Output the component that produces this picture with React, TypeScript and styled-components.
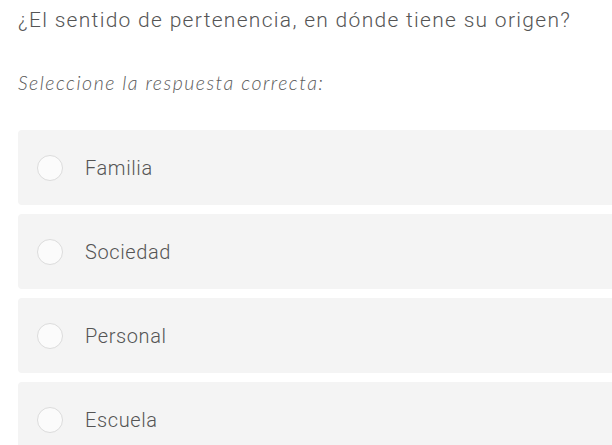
import React from 'react';
import styled, { createGlobalStyle } from 'styled-components';

const GlobalStyle = createGlobalStyle`
  html, body {
    margin: 0;
    padding: 0;
    background: #ffffff;
    overflow: hidden;
  }
`;

const options = ['Familia', 'Sociedad', 'Personal', 'Escuela'];

const App: React.FC = () => {
  return (
    <>
      <GlobalStyle />
      <Page>
        <Question>¿El sentido de pertenencia, en dónde tiene su origen?</Question>
        <Hint>Seleccione la respuesta correcta:</Hint>
        <OptionList>
          {options.map((label) => (
            <Option key={label}>
              <Radio />
              <OptionLabel>{label}</OptionLabel>
            </Option>
          ))}
        </OptionList>
      </Page>
    </>
  );
};

const Page = styled.div`
  width: 640px;
  padding: 7px 0 0 18px;
  font-family: Roboto, 'Noto Sans', sans-serif;
  color: #555555;
`;

const Question = styled.div`
  font-size: 21px;
  font-weight: 300;
  line-height: 26px;
  letter-spacing: 1.3px;
  white-space: nowrap;
`;

const Hint = styled.div`
  margin-top: 38px;
  font-family: Lato, 'Noto Sans', sans-serif;
  font-style: italic;
  font-weight: 300;
  font-size: 19.5px;
  line-height: 24px;
  letter-spacing: 1.5px;
  color: #5a5a5a;
`;

const OptionList = styled.div`
  margin-top: 35px;
  display: flex;
  flex-direction: column;
  gap: 9px;
`;

const Option = styled.div`
  height: 75px;
  display: flex;
  align-items: center;
  padding-left: 19px;
  background: #f4f4f4;
  border-radius: 4px;
`;

const Radio = styled.span`
  width: 26px;
  height: 26px;
  flex-shrink: 0;
  box-sizing: border-box;
  border-radius: 50%;
  border: 1px solid #dcdcdc;
  background: #fbfbfb;
`;

const OptionLabel = styled.span`
  margin-left: 22px;
  font-size: 20px;
  font-weight: 300;
  letter-spacing: 0.6px;
  color: #555555;
`;

export default App;
